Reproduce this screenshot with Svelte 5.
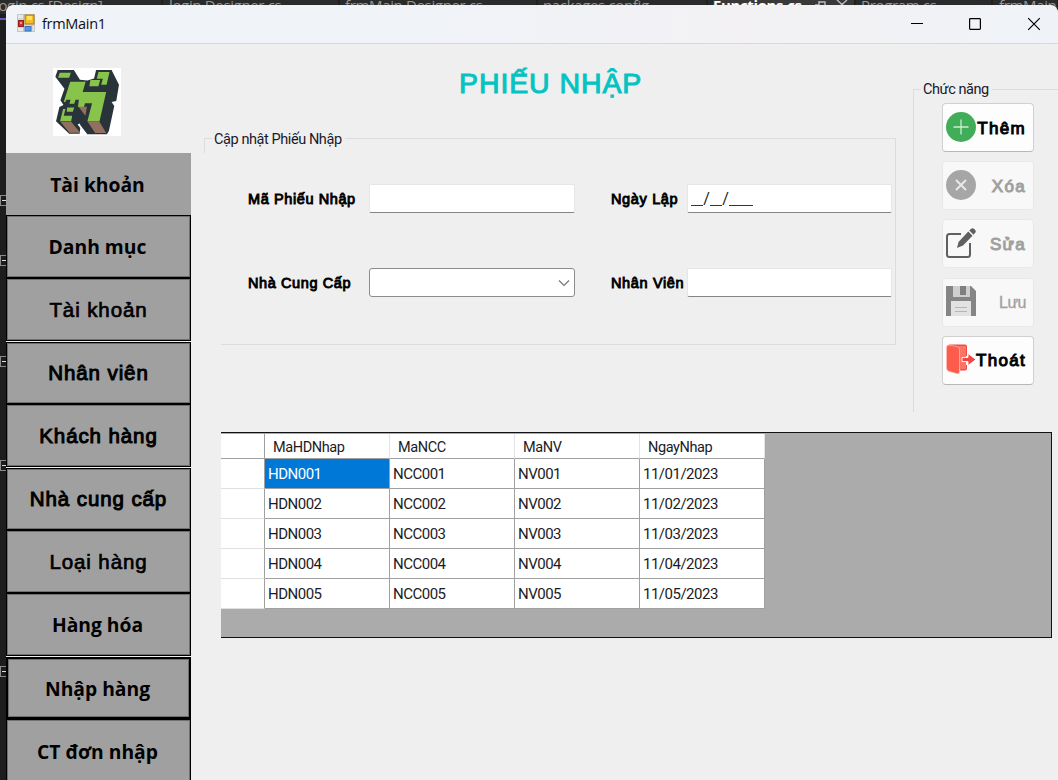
<script>
  const menu = [
    { label: 'Tài khoản', h: 62, kind: 'flat', font: 'open' },
    { label: 'Danh mục', h: 63, font: 'open' },
    { label: 'Tài khoản', h: 63, font: 'arial', light: true },
    { label: 'Nhân viên', h: 62, gap: true, font: 'arial' },
    { label: 'Khách hàng', h: 63, font: 'arial' },
    { label: 'Nhà cung cấp', h: 62, gap: true, font: 'arial' },
    { label: 'Loại hàng', h: 63, font: 'arial', light: true },
    { label: 'Hàng hóa', h: 63, font: 'open' },
    { label: 'Nhập hàng', h: 62, gap: true, kind: 'active', font: 'open' },
    { label: 'CT đơn nhập', h: 64, font: 'open' }
  ];
  const columns = ['MaHDNhap', 'MaNCC', 'MaNV', 'NgayNhap'];
  const rows = [1, 2, 3, 4, 5].map((n) => [`HDN00${n}`, `NCC00${n}`, `NV00${n}`, `11/0${n}/2023`]);
  const tabs = [
    { x: 0, t: 'login.cs [Design]', w: 163, shift: -5 },
    { x: 169, t: 'login.Designer.cs', w: 171 },
    { x: 345, t: 'frmMain.Designer.cs', w: 193 },
    { x: 543, t: 'packages.config', w: 165 },
    { x: 713, t: 'Functions.cs', w: 143, on: true },
    { x: 861, t: 'Program.cs', w: 132 },
    { x: 999, t: 'frmMain.cs', w: 60 }
  ];
  const folds = [200, 260, 361, 465, 671];
</script>

<div class="desktop">
  <div class="tabs">
    {#each tabs as tab}
      <span class="tab" class:on={tab.on} style="left:{tab.x}px;width:{tab.w}px;text-indent:{tab.shift ?? 0}px">{tab.t}</span>
    {/each}
    <svg class="tabicons" width="36" height="10" viewBox="0 0 36 10"><path d="M0 5h4M4 1v8M4 2h6v5H4M22 0l10 9M32 0l-10 9" fill="none" stroke="#bbb" stroke-width="1.4" /></svg>
  </div>
  <i class="accent"></i>
  {#each folds as y}
    <i class="fold" style="top:{y - 5}px"></i>
  {/each}

  <div class="window">
    <header class="titlebar">
      <svg class="appicon" width="18" height="18" viewBox="0 0 18 18">
        <rect x=".5" y=".5" width="17" height="17" fill="#e6e8ea" stroke="#c4c7ca" />
        <path d="M6.5 1v16M1 5h6M1 13h6M7 11h10M15 11v6" stroke="#bfc4c9" />
        <rect x="8" y="1" width="9" height="9" fill="#f5bd20" stroke="#a77806" />
        <rect x="10" y="2" width="5" height="4" fill="#ffe060" />
        <rect x="1.5" y="6.5" width="5" height="6" fill="#c9302c" stroke="#942020" />
        <rect x="3" y="8" width="2" height="2" fill="#f29a94" />
        <rect x="8" y="12.5" width="6" height="4.5" fill="#5796e8" stroke="#3f70ba" />
      </svg>
      <span class="wintitle">frmMain1</span>
      <svg class="controls" width="134" height="16" viewBox="0 0 134 16" fill="none" stroke="#000">
        <path d="M0 7.5h12" />
        <rect x="58.6" y="2.6" width="10.8" height="10.8" rx=".8" stroke-width="1.2" />
        <path d="M117.2 2.2l11.6 11.6M128.8 2.2l-11.6 11.6" stroke-width="1.2" />
      </svg>
    </header>

    <div class="body">
      <nav>
        <svg class="logo" width="68" height="68" viewBox="0 0 202 202">
          <rect width="202" height="202" fill="#fff" />
          <path d="M14 6h48l18 29 22 2 20-6 6-25h46l22 44-8 48-14 3 8 12-16 74-6 10h-58l-20-26-3-6-6 3 8 10-2 17H48L9 158l10-42 12-6-9-14 12-34L7 26z" fill="#29343a" />
          <path d="M20 14h33l-5 15H15z" fill="#88c34b" />
          <path d="M135 12h33l-9 38h-16l5-18h-18z" fill="#88c34b" />
          <path d="M111 36h29l-5 18h-27z" fill="#88c34b" />
          <path d="M51 41h46l-9 30h70l-20 88h-36l14-54H95l-3 11H74l3-22H67l-4 12H49l3-12H40l-4 8-4-2z" fill="#88c34b" />
          <path d="M42 117h21l-4 13H41zM30 122h7l-5 20h25l-3 16H21z" fill="#88c34b" />
          <path d="M76 115h25l-5 27zM22 160h32l27 32H49zM103 160h35l20 33h-33z" fill="#91705f" />
        </svg>
        {#each menu as m}
          <button class="item {m.kind ?? ''} {m.font}" class:gap={m.gap} class:light={m.light} style="height:{m.h}px">{m.label}</button>
        {/each}
      </nav>

      <main>
        <div class="upper">
          <section class="left">
            <h1>PHIẾU NHẬP</h1>
            <div class="group">
              <span class="legend">Cập nhật Phiếu Nhập</span>
              <div class="frow">
                <label class="l1" for="code">Mã Phiếu Nhập</label><div id="code" class="field"></div>
                <label class="l2" for="date">Ngày Lập</label><div id="date" class="field date"><u class="d2"></u><b>/</b><u class="d2"></u><b>/</b><u class="d4"></u></div>
              </div>
              <div class="frow">
                <label class="l1" for="supplier">Nhà Cung Cấp</label>
                <div id="supplier" class="field combo"><svg width="12" height="8" viewBox="0 0 12 8"><path d="M1 1.5l5 5 5-5" fill="none" stroke="#777" stroke-width="1.2" /></svg></div>
                <label class="l2" for="staff">Nhân Viên</label><div id="staff" class="field"></div>
              </div>
            </div>
          </section>

          <aside>
            <span class="legend2">Chức năng</span>
            <button class="act">
              <svg width="30" height="30" viewBox="0 0 30 30"><circle cx="15" cy="15" r="15" fill="#41ad59" /><path d="M15 7.500v15M7.500 15h15" stroke="#c9f0d0" stroke-width="1.3" /></svg>
              <span>Thêm</span>
            </button>
            <button class="act off">
              <svg width="30" height="30" viewBox="0 0 30 30"><circle cx="15" cy="15" r="15" fill="#a6a6a6" /><path d="M10 10l10 10M20 10L10 20" stroke="#e8e8e8" stroke-width="2" /></svg>
              <span>Xóa</span>
            </button>
            <button class="act off">
              <svg width="30" height="30" viewBox="0 0 30 30"><path d="M15 6H3.500Q1 6 1 8.500v18Q1 29 3.500 29h18q2.500 0 2.500-2.500V15" fill="none" stroke="#606060" stroke-width="2" /><path d="M11 20l1.500-6L22.300 3.600l4.200 4.200L17 17.500zM23.300 2.600l1.500-1.600q1.500-1.500 3.500 0l.7.700q1.600 1.800 0 3.400l-1.500 1.600z" fill="#606060" /></svg>
              <span>Sửa</span>
            </button>
            <button class="act off">
              <svg width="30" height="30" viewBox="0 0 30 30"><path d="M0 0h25l5 5v25H0z" fill="#858585" /><path d="M7 0h17v11H7z" fill="#cfcfcf" /><path d="M14 0h6v9h-6z" fill="#808080" /><path d="M5 15h20v15H5z" fill="#e2e2e2" /><path d="M9 21.500h12M9 25.500h12" stroke="#b5b5b5" /></svg>
              <span class="a4">Lưu</span>
            </button>
            <button class="act">
              <svg width="30" height="30" viewBox="0 0 30 30"><path d="M3 .5h16q2 0 2 2V12h-2V3H6M19 21h2v3.500q0 2-2 2h-6" fill="#f44a43" /><path d="M12 2h8v23h-7z" fill="#fb7466" /><path d="M3 1l8 1.500q2.500.5 2.500 3v22q0 3-3 2l-7-2Q.5 27 .5 24V4Q.5.500 3 1z" fill="#fd5b4b" stroke="#fbc0b8" stroke-width=".7" /><path d="M16 13.500h6v-4l8 6-8 6v-4h-6z" fill="#f2453e" stroke="#fff" stroke-width=".9" /></svg>
              <span>Thoát</span>
            </button>
          </aside>
        </div>

        <div class="grid">
          <div class="gr head"><span class="rh"></span>{#each columns as c}<span>{c}</span>{/each}</div>
          {#each rows as row, i}
            <div class="gr"><span class="rh"></span>{#each row as cell, j}<span class:sel={i === 0 && j === 0}>{cell}</span>{/each}</div>
          {/each}
        </div>
      </main>
    </div>
  </div>
</div>

<style>
  :global(body) { margin: 0; overflow: hidden; }
  * { box-sizing: border-box; }
  button { margin: 0; padding: 0; color: #000; }
  .desktop { position: relative; width: 1058px; height: 780px; overflow: hidden; background: #1d1d1d; padding: 5px 0 0 6px; font-family: Roboto, sans-serif; }
  .tabs { position: absolute; inset: 0 0 auto 0; height: 14px; background: #2b2b2b; overflow: hidden; }
  .tab { position: absolute; top: -5px; height: 20px; font: 15px/20px "Open Sans", sans-serif; color: #9a9793; white-space: nowrap; overflow: hidden; border-right: 2px solid #202020; letter-spacing: -.35px; }
  .tab.on { color: #fff; font-weight: 700; background: #393939; }
  .tabicons { position: absolute; left: 815px; top: 0; }
  .accent { position: absolute; left: 0; top: 18px; width: 6px; height: 2px; background: #6257c5; }
  .fold { position: absolute; left: 0; width: 11px; height: 11px; border: 1px solid #8a8a8a; background: linear-gradient(#ddd, #ddd) 1px 4px / 6px 1px no-repeat; }
  .window { position: relative; height: 775px; background: #efefef; border-radius: 8px 8px 0 0; overflow: hidden; }
  .titlebar { height: 39px; border-bottom: 1px solid #d8d9d9; background: linear-gradient(90deg, #f0f3f8 0, #f0f3f8 40%, #f3f1f4 70%, #f1f2f5 85%, #eff3f8); display: flex; align-items: center; padding: 0 13px 1px 11px; }
  .appicon { margin-top: -1px; }
  .wintitle { margin-left: 7px; font: 14.5px/20px "Open Sans", sans-serif; flex: 1; color: #111; letter-spacing: -.3px; }
  .body { display: flex; height: 736px; }
  nav { width: 185px; flex: none; display: flex; flex-direction: column; }
  .logo { margin: 24px 0 17px 47px; flex: none; }
  .item { flex: none; border: 1px solid #000; outline: 1px solid #707070; outline-offset: -2px; background: #a0a0a0; width: 185px; text-align: center; padding: 0 2px 0 0; }
  .item.open { font: 700 19.3px "Open Sans", sans-serif; }
  .item.arial { font: 400 20.5px "Liberation Sans", sans-serif; letter-spacing: .9px; -webkit-text-stroke: 1px #000; padding: 0; }
  .item.light { -webkit-text-stroke-width: .7px; }
  .item.flat { border: 0; outline: 0; padding: 1px 2px 0 0; }
  .item.active { border-width: 2px; outline-offset: -3px; }
  .item.gap { margin-top: 1px; }
  main { flex: 1; min-width: 0; }
  .upper { height: 388px; display: flex; }
  .left { width: 705px; margin-left: 13px; flex: none; }
  h1 { margin: 21px 0 0 255px; height: 36px; font: 400 28.5px/36px "Liberation Sans", sans-serif; color: #05c3c3; white-space: nowrap; letter-spacing: .9px; -webkit-text-stroke: 1px #05c3c3; }
  .group { position: relative; margin-top: 37px; width: 692px; height: 207px; border: solid #dcdcdc; border-width: 1px 1px 0 0; padding: 45px 0 0 44px; }
  .group::before { content: ""; position: absolute; left: 0; top: -1px; width: 1px; height: 15px; background: #dcdcdc; }
  .group::after { content: ""; position: absolute; left: 17px; right: 0; bottom: 0; height: 1px; background: #dcdcdc; }
  .legend, .legend2 { position: absolute; padding: 0 3px 0 2px; background: #efefef; font-size: 14.500px; line-height: 20px; letter-spacing: -.42px; color: #1a1a2a; white-space: nowrap; }
  .legend { left: 8px; top: -9px; }
  .legend2 { left: 7px; top: -10px; }
  .frow { display: flex; height: 84px; }
  .frow label { font: 400 14.500px/30px "Liberation Sans", sans-serif; white-space: nowrap; letter-spacing: .6px; -webkit-text-stroke: .9px #000; flex: none; }
  .l1 { width: 121px; }
  .frow .l2 { width: 76px; margin-left: 36px; letter-spacing: .65px; }
  .field { width: 206px; flex: none; height: 29px; background: #fff; border: 1px solid #e6e6e6; border-bottom-color: #858585; border-radius: 2px; }
  .l2 + .field { width: 205px; }
  .combo { border-color: #8c8c8c; border-radius: 3px; display: flex; justify-content: flex-end; align-items: center; padding-right: 4px; }
  .date { display: flex; padding-left: 3px; }
  .date u { height: 21px; border-bottom: 1px solid #333; text-decoration: none; }
  .date b { font: 400 16px/27px Roboto, sans-serif; width: 7px; text-align: center; color: #222; }
  .d2 { width: 12px; } .d4 { width: 24px; }
  aside { position: relative; width: 150px; margin: 45px 0 0 4px; height: 323px; border: solid #dcdcdc; border-width: 1px 0 0 1px; padding: 13px 0 0 28px; display: flex; flex-direction: column; gap: 9.2px; flex: none; }
  .act { width: 92px; height: 49px; flex: none; background: #fdfdfd; border: 1px solid #d0d0d0; border-bottom-color: #b8b8b8; border-radius: 4px; display: flex; justify-content: space-between; align-items: center; padding: 0 7px 2px 3px; font: 400 17px "Liberation Sans", sans-serif; letter-spacing: 1.3px; -webkit-text-stroke: 1px #000; }
  .act svg { flex: none; margin-right: -10px; }
  .act span { padding-top: 4px; }
  .off { background: #f8f8f8; border-color: #e8e8e8; color: #a0a0a0; -webkit-text-stroke-color: #a0a0a0; }
  .act .a4 { font-size: 16px; letter-spacing: -.5px; -webkit-text-stroke-width: .3px; }
  .grid { width: 831px; height: 206px; margin-left: 30px; background: #ababab; border: 1px solid #111; border-left: 0; overflow: hidden; padding-top: 1px; }
  .gr { display: flex; height: 30px; }
  .gr.head { height: 25px; }
  .gr span { width: 125px; border: solid #a0a0a0; border-width: 0 1px 1px 0; background: #fff; font-size: 15px; line-height: 31px; padding-left: 3px; letter-spacing: -.5px; color: #1b1b26; }
  .gr.head span { line-height: 27px; padding-left: 8px; border-right-color: #e3e3e3; font-size: 14.500px; letter-spacing: -.4px; }
  .gr span.rh, .gr.head span.rh { width: 44px; border-right-color: #a0a0a0; border-bottom-color: #e0e0e0; }
  .gr.head span.rh { border-bottom-color: #a0a0a0; }
  .gr .sel { background: #0078d7; color: #fff; }
</style>
